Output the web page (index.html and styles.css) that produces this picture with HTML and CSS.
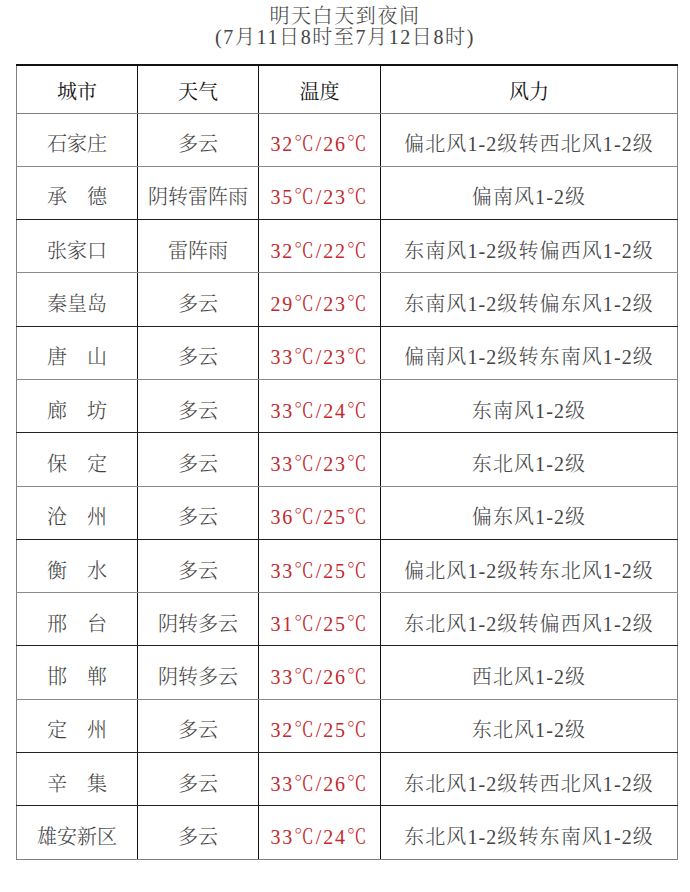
FILE: index.html
```html
<!DOCTYPE html>
<html lang="zh">
<head>
<meta charset="utf-8">
<title>明天白天到夜间</title>
<link rel="stylesheet" href="styles.css">
</head>
<body>
<div class="title">
  <div class="title-line">明天白天到夜间</div>
  <div class="title-line">(7月11日8时至7月12日8时)</div>
</div>
<table class="weather">
  <colgroup>
    <col class="c-city"><col class="c-wx"><col class="c-temp"><col class="c-wind">
  </colgroup>
  <thead>
    <tr class="head"><th>城市</th><th>天气</th><th>温度</th><th>风力</th></tr>
  </thead>
  <tbody>
    <tr class="g"><td>石家庄</td><td>多云</td><td class="t">32℃/26℃</td><td>偏北风1-2级转西北风1-2级</td></tr>
    <tr class="b"><td>承　德</td><td>阴转雷阵雨</td><td class="t">35℃/23℃</td><td>偏南风1-2级</td></tr>
    <tr class="g"><td>张家口</td><td>雷阵雨</td><td class="t">32℃/22℃</td><td>东南风1-2级转偏西风1-2级</td></tr>
    <tr class="b"><td>秦皇岛</td><td>多云</td><td class="t">29℃/23℃</td><td>东南风1-2级转偏东风1-2级</td></tr>
    <tr class="g"><td>唐　山</td><td>多云</td><td class="t">33℃/23℃</td><td>偏南风1-2级转东南风1-2级</td></tr>
    <tr class="b"><td>廊　坊</td><td>多云</td><td class="t">33℃/24℃</td><td>东南风1-2级</td></tr>
    <tr class="g"><td>保　定</td><td>多云</td><td class="t">33℃/23℃</td><td>东北风1-2级</td></tr>
    <tr class="b"><td>沧　州</td><td>多云</td><td class="t">36℃/25℃</td><td>偏东风1-2级</td></tr>
    <tr class="g"><td>衡　水</td><td>多云</td><td class="t">33℃/25℃</td><td>偏北风1-2级转东北风1-2级</td></tr>
    <tr class="b"><td>邢　台</td><td>阴转多云</td><td class="t">31℃/25℃</td><td>东北风1-2级转偏西风1-2级</td></tr>
    <tr class="g"><td>邯　郸</td><td>阴转多云</td><td class="t">33℃/26℃</td><td>西北风1-2级</td></tr>
    <tr class="b"><td>定　州</td><td>多云</td><td class="t">32℃/25℃</td><td>东北风1-2级</td></tr>
    <tr class="b"><td>辛　集</td><td>多云</td><td class="t">33℃/26℃</td><td>东北风1-2级转西北风1-2级</td></tr>
    <tr class="last"><td>雄安新区</td><td>多云</td><td class="t">33℃/24℃</td><td>东北风1-2级转东南风1-2级</td></tr>
  </tbody>
</table>
</body>
</html>
```

FILE: styles.css
```css
html, body {
  margin: 0;
  padding: 0;
  background: #ffffff;
}
body {
  font-family: "Liberation Serif", "Noto Serif CJK SC", "Noto Sans CJK SC", serif;
  color: #444444;
}
.title {
  padding-top: 6px;
  text-align: center;
  font-size: 20px;
  line-height: 21px;
  color: #444;
  font-weight: 300;
  letter-spacing: 1.6px;
}
.weather {
  margin: 16px 0 0 16px;
  width: 661px;
  border-collapse: collapse;
  table-layout: fixed;
}
.c-city { width: 121px; }
.c-wx { width: 121px; }
.c-temp { width: 122px; }
.c-wind { width: 297px; }
.weather tr { height: 53.3px; }
.weather tr.head { height: 48px; }
.weather th, .weather td {
  text-align: center;
  vertical-align: middle;
  padding: 6px 0 0 0;
  white-space: nowrap;
  border-left: 1px solid #111;
  border-right: 1px solid #111;
  font-size: 20px;
  font-weight: 300;
}
.weather th:first-child, .weather td:first-child { border-left: 1px solid #808080; }
.weather th:last-child, .weather td:last-child { border-right: 1px solid #808080; }
.head th {
  padding-top: 2px;
  color: #151515;
  font-weight: 400;
  border-top: 2px solid #111;
  border-bottom: 1px solid #808080;
}
.g td { border-bottom: 1px solid #8a8a8a; }
.b td { border-bottom: 1.5px solid #222; }
.last td { border-bottom: 1px solid #808080; }
.weather td.t {
  color: #c4282c;
  letter-spacing: 1.8px;
}
.weather td:nth-child(4) { letter-spacing: 1.1px; }
```
